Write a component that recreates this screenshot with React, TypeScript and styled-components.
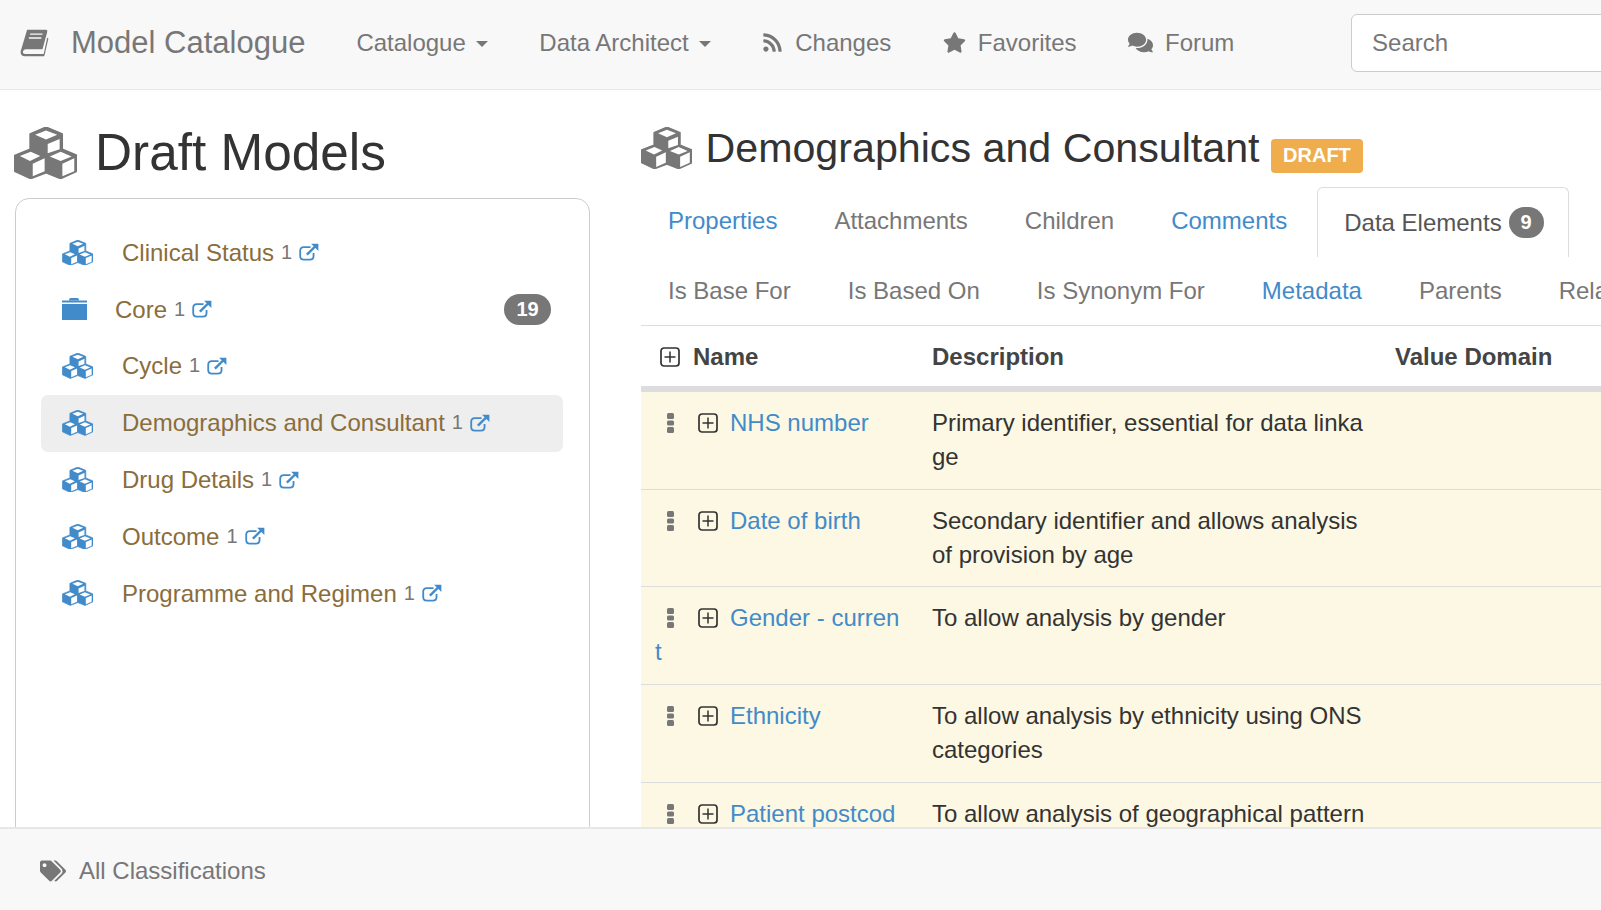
import { FC } from 'react';
import styled, { createGlobalStyle } from 'styled-components';
import { FaComments, FaRss, FaStar, FaTags } from 'react-icons/fa';

const models = [
  { name: 'Clinical Status' },
  { name: 'Core', folder: true, count: 19 },
  { name: 'Cycle' },
  { name: 'Demographics and Consultant', active: true },
  { name: 'Drug Details' },
  { name: 'Outcome' },
  { name: 'Programme and Regimen' },
];

const tabs = [
  { label: 'Properties', filled: true },
  { label: 'Attachments' },
  { label: 'Children' },
  { label: 'Comments', filled: true },
  { label: 'Data Elements', active: true, count: 9 },
  { label: 'Is Base For' },
  { label: 'Is Based On' },
  { label: 'Is Synonym For' },
  { label: 'Metadata', filled: true },
  { label: 'Parents' },
  { label: 'Related To' },
];

const elements = [
  { name: 'NHS number', description: 'Primary identifier, essential for data linkage' },
  { name: 'Date of birth', description: 'Secondary identifier and allows analysis of provision by age' },
  { name: 'Gender - current', description: 'To allow analysis by gender' },
  { name: 'Ethnicity', description: 'To allow analysis by ethnicity using ONS categories' },
  { name: 'Patient postcode', description: 'To allow analysis of geographical patterns' },
];

const PlusBox: FC = () => (
  <PlusIcon viewBox="0 0 20 20" width="20" height="20">
    <rect x="1" y="1" width="18" height="18" rx="3" fill="none" stroke="#333" strokeWidth="1.7" />
    <path d="M10 4.500v11M4.500 10h11" stroke="#333" strokeWidth="1.5" />
  </PlusIcon>
);

const CubesIcon: FC<{ width: number; color: string }> = ({ width, color }) => (
  <svg viewBox="13 20 185 152" width={width} height={(width * 152) / 185} style={{ flex: 'none' }}>
    <path
      d="M107 20L155 40V85L198 103V150L150 172L107 155L62 172L15 150V103L60 85V40Z"
      fill={color}
      stroke={color}
      strokeLinejoin="round"
      strokeWidth="4"
    />
    <g fill="#fff">
      <path d="M107 30L140 43L107 57L75 43Z" />
      <path d="M112 70L147 55V85L112 97Z" />
      <path d="M62 93L90 105L60 120L30 105Z" />
      <path d="M68 128L103 112V150L68 165Z" />
      <path d="M150 93L182 107L150 120L118 107Z" />
      <path d="M155 128L190 112V150L155 165Z" />
    </g>
  </svg>
);

const BookIcon: FC = () => (
  <svg viewBox="12 16 98 94" width="29" height="28">
    <path
      d="M36 18H100Q106 18 104 26L88 84H32Q24 84 22 92Q20 100 30 100H92L104 45L108 48L95 104Q94 108 88 108H28Q14 108 14 92Z"
      fill="#777"
    />
    <path d="M46 33H88M42 46H84" stroke="#f8f8f8" strokeWidth="5" />
  </svg>
);

const LinkIcon: FC = () => (
  <svg viewBox="22 20 66 58" width="20" height="18" style={{ flex: 'none' }}>
    <path
      d="M60 33H38Q26 33 26 45V62Q26 74 38 74H58Q70 74 70 62V52"
      fill="none"
      stroke="#428bca"
      strokeWidth="6"
    />
    <path d="M48 58L76 30" stroke="#428bca" strokeWidth="8" />
    <path d="M62 22H86V46Z" fill="#428bca" />
  </svg>
);

const FolderIcon: FC = () => (
  <svg viewBox="0 0 25 22" width="25" height="22" style={{ flex: 'none' }}>
    <path d="M7 2Q7 0 9 0H15Q17 0 17 2V2.500H7Z" fill="#428bca" />
    <path d="M0 2.500H25V4.500H0Z" fill="#428bca" />
    <path d="M0 6H25V22H0Z" fill="#428bca" />
  </svg>
);

const DotsIcon: FC = () => (
  <DotsSvg viewBox="0 0 7 20" width="7" height="20">
    <rect x="0" y="0" width="7" height="6" rx="1.500" fill="#777" />
    <rect x="0" y="7.500" width="7" height="5" rx="1.500" fill="#777" />
    <rect x="0" y="14" width="7" height="6" rx="1.500" fill="#777" />
  </DotsSvg>
);

const App = () => {
  return (
    <Page>
      <GlobalStyle />
      <Navbar>
        <Brand>
          <BookIcon />
          <span>Model Catalogue</span>
        </Brand>
        <NavLink>Catalogue<Caret /></NavLink>
        <NavLink>Data Architect<Caret /></NavLink>
        <NavLink><FaRss size={21} />Changes</NavLink>
        <NavLink><FaStar size={23} />Favorites</NavLink>
        <NavLink><FaComments size={25} />Forum</NavLink>
        <SearchInput placeholder="Search" />
      </Navbar>
      <Main>
        <Sidebar>
          <SideTitle><CubesIcon width={63} color="#777" />Draft Models</SideTitle>
          <Panel>
            {models.map((model) => (
              <Item key={model.name} $active={model.active}>
                {model.folder ? <FolderIcon /> : <CubesIcon width={31} color="#428bca" />}
                <ItemName $folder={model.folder}>{model.name}</ItemName>
                <Version>1</Version>
                <LinkIcon />
                {model.count && <CountBadge>{model.count}</CountBadge>}
              </Item>
            ))}
          </Panel>
        </Sidebar>
        <Content>
          <Title>
            <CubesIcon width={51} color="#777" />
            <span>Demographics and Consultant</span>
            <Label>DRAFT</Label>
          </Title>
          <Tabs>
            {tabs.map((tab) => (
              <Tab key={tab.label} $active={tab.active} $filled={tab.filled}>
                {tab.label}
                {tab.count && <TabBadge>{tab.count}</TabBadge>}
              </Tab>
            ))}
          </Tabs>
          <Table>
            <colgroup>
              <col width="277" />
              <col width="463" />
              <col width="339" />
            </colgroup>
            <thead>
              <tr>
                <HeadCell><HeadPlus><PlusBox /></HeadPlus>Name</HeadCell>
                <HeadCell>Description</HeadCell>
                <HeadCell>Value Domain</HeadCell>
              </tr>
            </thead>
            <tbody>
              {elements.map((element) => (
                <tr key={element.name}>
                  <Cell>
                    <Dots><DotsIcon /></Dots>
                    <PlusBox />
                    <ElementLink>{element.name}</ElementLink>
                  </Cell>
                  <Cell>{element.description}</Cell>
                  <Cell />
                </tr>
              ))}
            </tbody>
          </Table>
        </Content>
      </Main>
      <Footer>
        <FaTags size={26} />
        <span>All Classifications</span>
      </Footer>
    </Page>
  );
};

export default App;

const GlobalStyle = createGlobalStyle`
  html, body {
    margin: 0;
    height: 100%;
    overflow: hidden;
  }
  body {
    font-family: "Liberation Sans", Arial, sans-serif;
    font-size: 24px;
    line-height: 33.33px;
    color: #333;
  }
  * {
    box-sizing: border-box;
  }
`;
const Page = styled.div`
  display: flex;
  flex-direction: column;
  height: 100vh;
  overflow: hidden;
`;
const Navbar = styled.nav`
  flex: none;
  display: flex;
  align-items: center;
  height: 90px;
  padding: 0 0 3px 20px;
  background: #f8f8f8;
  border-bottom: 1px solid #e7e7e7;
  color: #777;
  white-space: nowrap;
`;
const Brand = styled.div`
  display: flex;
  align-items: center;
  gap: 22px;
  margin-right: 25.250px;
  font-size: 31px;
`;
const NavLink = styled.a`
  display: flex;
  align-items: center;
  gap: 12px;
  padding: 0 25.750px;
`;
const Caret = styled.span`
  width: 0;
  height: 0;
  margin: 3px 0 0 -2px;
  border-top: 6px solid #777;
  border-left: 6px solid transparent;
  border-right: 6px solid transparent;
`;
const SearchInput = styled.input`
  flex: none;
  width: 340px;
  height: 58px;
  margin-left: 91px;
  padding: 0 20px;
  border: 1px solid #ccc;
  border-radius: 6px;
  background: #fff;
  font: inherit;
  color: #555;
  &::placeholder {
    color: #777;
    opacity: 1;
  }
`;
const Main = styled.main`
  flex: 1;
  min-height: 0;
  display: flex;
  overflow: hidden;
`;
const Sidebar = styled.aside`
  flex: none;
  width: 641px;
  padding: 35px 0 0 15px;
`;
const SideTitle = styled.h2`
  display: flex;
  align-items: center;
  gap: 18px;
  margin: 0 0 17px -1px;
  font-size: 51.300px;
  line-height: 56px;
  font-weight: 400;
`;
const Panel = styled.div`
  width: 575px;
  height: 700px;
  padding: 26px 26px 26px 25px;
  border: 1px solid #ccc;
  border-radius: 14px;
`;
const Item = styled.div<{ $active?: boolean }>`
  display: flex;
  align-items: center;
  height: 56.800px;
  padding: 0 12px 2px 21px;
  border-radius: 7px;
  background: ${(props) => (props.$active ? '#eee' : 'transparent')};
  color: #8a6d3b;
`;
const ItemName = styled.span<{ $folder?: boolean }>`
  margin-left: ${(props) => (props.$folder ? '28px' : '29px')};
`;
const Version = styled.span`
  margin: 0 7px;
  font-size: 20px;
  color: #777;
`;
const CountBadge = styled.span`
  margin-left: auto;
  min-width: 47px;
  height: 31px;
  border-radius: 16px;
  background: #777;
  color: #fff;
  font-size: 20px;
  font-weight: 700;
  line-height: 31px;
  text-align: center;
`;
const Content = styled.section`
  flex: none;
  width: 1080px;
  padding-top: 36px;
`;
const Title = styled.h3`
  display: flex;
  align-items: center;
  gap: 13.500px;
  height: 44px;
  margin: 0 0 17px;
  font-size: 41.200px;
  line-height: 44px;
  font-weight: 400;
`;
const Label = styled.span`
  height: 34px;
  margin: 16px 0 0 -2px;
  padding: 0 12px;
  border-radius: 4px;
  background: #f0ad4e;
  color: #fff;
  font-size: 20px;
  font-weight: 700;
  line-height: 32px;
`;
const Tabs = styled.div`
  display: flex;
  flex-wrap: wrap;
  padding-bottom: 2px;
  border-bottom: 1px solid #ddd;
`;
const Tab = styled.a<{ $active?: boolean; $filled?: boolean }>`
  display: flex;
  align-items: center;
  gap: 7px;
  height: ${(props) => (props.$active ? '70px' : '66px')};
  padding: 0 ${(props) => (props.$active ? '24px' : '27px')} 0 26px;
  margin-right: 2px;
  border: 1px solid ${(props) => (props.$active ? '#ddd' : 'transparent')};
  border-bottom: 0;
  border-radius: 6px 6px 0 0;
  color: ${(props) => (props.$active ? '#555' : props.$filled ? '#428bca' : '#777')};
`;
const TabBadge = styled.span`
  width: 35px;
  height: 31px;
  border-radius: 16px;
  background: #777;
  color: #fff;
  font-size: 20px;
  font-weight: 700;
  line-height: 31px;
  text-align: center;
`;
const Table = styled.table`
  width: 1079px;
  table-layout: fixed;
  border-collapse: separate;
  border-spacing: 0;
`;
const HeadCell = styled.th`
  height: 66px;
  padding: 2px 14px 0;
  border-bottom: 6px solid #ddd;
  font-weight: 700;
  text-align: left;
  color: #444;
`;
const HeadPlus = styled.span`
  margin: 0 13px 0 5px;
`;
const PlusIcon = styled.svg`
  vertical-align: -2px;
`;
const Cell = styled.td`
  padding: 14px 12px 14.670px 14px;
  line-height: 34px;
  background: #fcf8e3;
  border-bottom: 1px solid #ddd;
  vertical-align: top;
  word-break: break-all;
`;
const Dots = styled.span`
  display: inline-block;
  width: 43px;
`;
const DotsSvg = styled.svg`
  margin-left: 12px;
  vertical-align: -2px;
`;
const ElementLink = styled.a`
  margin-left: 12px;
  color: #428bca;
`;
const Footer = styled.footer`
  flex: none;
  display: flex;
  align-items: center;
  gap: 13px;
  height: 83px;
  padding: 3px 0 0 40px;
  background: #f8f8f8;
  border-top: 2px solid #e7e7e7;
  color: #777;
`;
